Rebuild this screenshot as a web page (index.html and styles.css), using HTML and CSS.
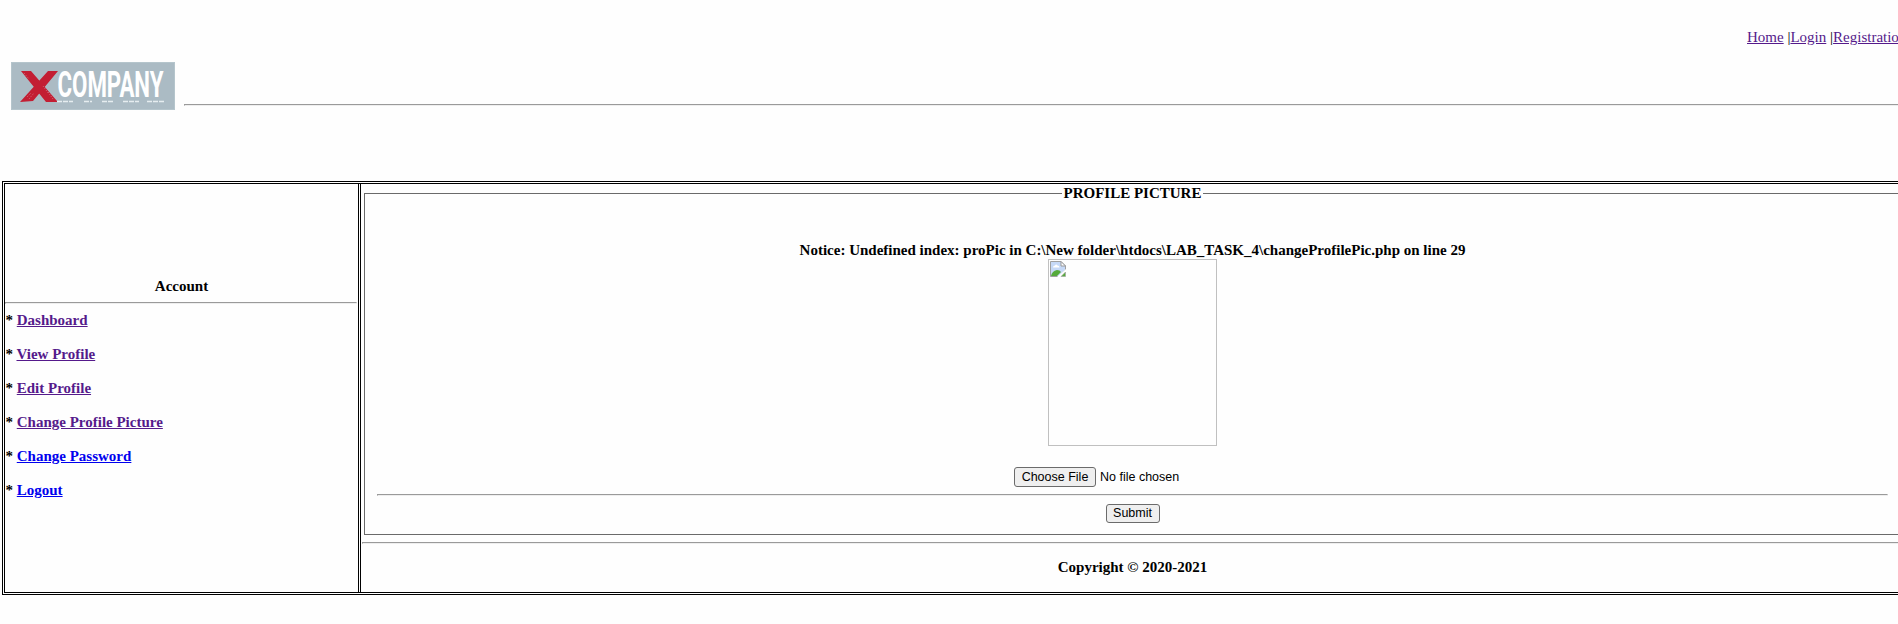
FILE: index.html
```html
<!DOCTYPE html>
<html lang="en">
<head>
<meta charset="utf-8">
<title>Profile Picture</title>
<link rel="stylesheet" href="styles.css">
</head>
<body>
<header class="header">
  <svg class="logo" width="164" height="48" viewBox="0 0 164 48" role="img" aria-label="XCompany">
    <rect width="164" height="48" fill="#abbbc4"/>
    <rect x=".5" y=".5" width="163" height="47" fill="none" stroke="#b5c5cc"/>
    <path d="M10 9H20L46 39V40H35ZM37 9H47L22 39L9 40Z" fill="#c31e33"/>
    <path d="M16 35l4-4M18 37l5-6M32 24l6 8M13 11l5 6M37 30l5 7" stroke="#d2828e" stroke-width=".8" stroke-dasharray="1 1.5"/>
    <text class="logo-text" x="46.500" y="35" textLength="106" lengthAdjust="spacingAndGlyphs">COMPANY</text>
    <path d="M46 39.5h16M73 39.5h8M91 39.5h11M112 39.5h16M136 39.5h17" stroke="#e6edf0" stroke-width="1.6" stroke-dasharray="5 1"/>
  </svg>
  <div class="header-main">
    <nav class="nav"><a class="visited" href="#">Home</a> |<a class="visited" href="#">Login</a> |<a class="visited" href="#">Registration</a></nav>
    <hr class="rule">
  </div>
</header>
<div class="layout">
  <aside class="sidebar">
    <div class="title">Account</div>
    <hr class="rule side-rule">
    <ul class="menu">
      <li>* <a class="visited" href="#">Dashboard</a></li>
      <li>* <a class="visited" href="#">View Profile</a></li>
      <li>* <a class="visited" href="#">Edit Profile</a></li>
      <li>* <a class="visited" href="#">Change Profile Picture</a></li>
      <li>* <a href="#">Change Password</a></li>
      <li>* <a href="#">Logout</a></li>
    </ul>
  </aside>
  <main class="content">
    <fieldset class="panel">
      <legend class="legend">PROFILE PICTURE</legend>
      <div class="notice">Notice: Undefined index: proPic in C:\New folder\htdocs\LAB_TASK_4\changeProfilePic.php on line 29</div>
      <div class="picture">
        <svg width="16" height="16" viewBox="0 0 16 16">
          <path d="M.5 .5H11L15.5 5V9L8.5 15.5H.5Z" fill="#c6d9f7" stroke="#a0a0a0"/>
          <path d="M3 6.5q0-2 2-2 1-2 2.500 0 2 0 2 2z" fill="#fff"/>
          <path d="M1 15q1-5 6-6 3 0 4 2l-4 4z" fill="#55aa3b"/>
          <path d="M11 .5V5h4.500z" fill="#fff" stroke="#999"/>
          <path d="M7 16l9-8v3l-5 5z" fill="#fff"/>
          <path d="M11 15.500h4.500V11z" fill="#55aa3b" stroke="#a0a0a0" stroke-width=".6"/>
        </svg>
      </div>
      <input class="file" type="file">
      <hr class="rule form-rule">
      <button class="submit" type="submit">Submit</button>
    </fieldset>
    <hr class="rule footer-rule">
    <div class="copyright">Copyright © 2020-2021</div>
  </main>
</div>
</body>
</html>
```
FILE: styles.css
```css
* { box-sizing: border-box; }
html { overflow: hidden; }
body {
  margin: 0;
  width: 1898px;
  height: 624px;
  overflow: hidden;
  background: #fefefe;
  color: #000;
  font: 15px/17px "Liberation Serif", "Times New Roman", serif;
}
a { color: #0000ee; }
.visited { color: #551a8b; }
.rule {
  height: 2px;
  margin: 0;
  border: 1px solid;
  border-color: #9a9a9a #eee #eee #9a9a9a;
}
.header { display: flex; height: 181px; padding-left: 11px; }
.logo { flex: none; margin-top: 62px; overflow: visible; }
.logo-text { font: 700 36px Roboto, sans-serif; fill: #fff; }
.header-main { flex: 1; margin-left: 9px; padding-top: 29px; }
.nav { height: 75px; padding-left: 1563px; white-space: nowrap; }
.layout {
  display: flex;
  width: 1905px;
  height: 414px;
  margin-left: 2px;
  border: 3px double #000;
  font-weight: bold;
}
.sidebar { width: 356px; border-right: 3px double #000; padding-top: 94px; }
.title { text-align: center; height: 24px; }
.side-rule { width: 352px; }
.menu { list-style: none; margin: 8px 0 0; padding: 0 0 0 .5px; display: grid; gap: 17px; }
.content { flex: 1; text-align: center; }
.panel {
  width: 1537px;
  height: 350px;
  margin: 1px 0 0 3px;
  padding: 0 12px;
  border: 1px solid #6a6a6a;
}
.legend { margin: 0 auto; padding: 0 2px; height: 17px; }
.notice { padding-top: 40px; }
.picture {
  width: 169px;
  height: 187px;
  margin: 0 auto;
  padding: 1px;
  border: 1px solid #c0c0c0;
  text-align: left;
}
.picture svg { display: block; }
.file {
  display: block;
  width: 237px;
  height: 20px;
  margin: 21px auto 0;
  font: 12.5px "Liberation Sans", Arial, sans-serif;
}
.form-rule { margin-top: 7px; }
.submit {
  display: block;
  width: 54px;
  height: 19px;
  margin: 8px auto 0;
  padding: 0;
  border: 1px solid #6b6b6b;
  border-radius: 3px;
  background: #efefef;
  color: #000;
  font: 12.5px/15px "Liberation Sans", Arial, sans-serif;
}
.file::file-selector-button {
  width: 82px;
  height: 20px;
  margin: 0 4px 0 0;
  padding: 0;
  border: 1px solid #6b6b6b;
  border-radius: 3px;
  background: #efefef;
  color: #000;
  font: 12.5px "Liberation Sans", Arial, sans-serif;
}
.footer-rule { margin: 7px 0 0 1px; }
.copyright { margin-top: 15px; }
```
